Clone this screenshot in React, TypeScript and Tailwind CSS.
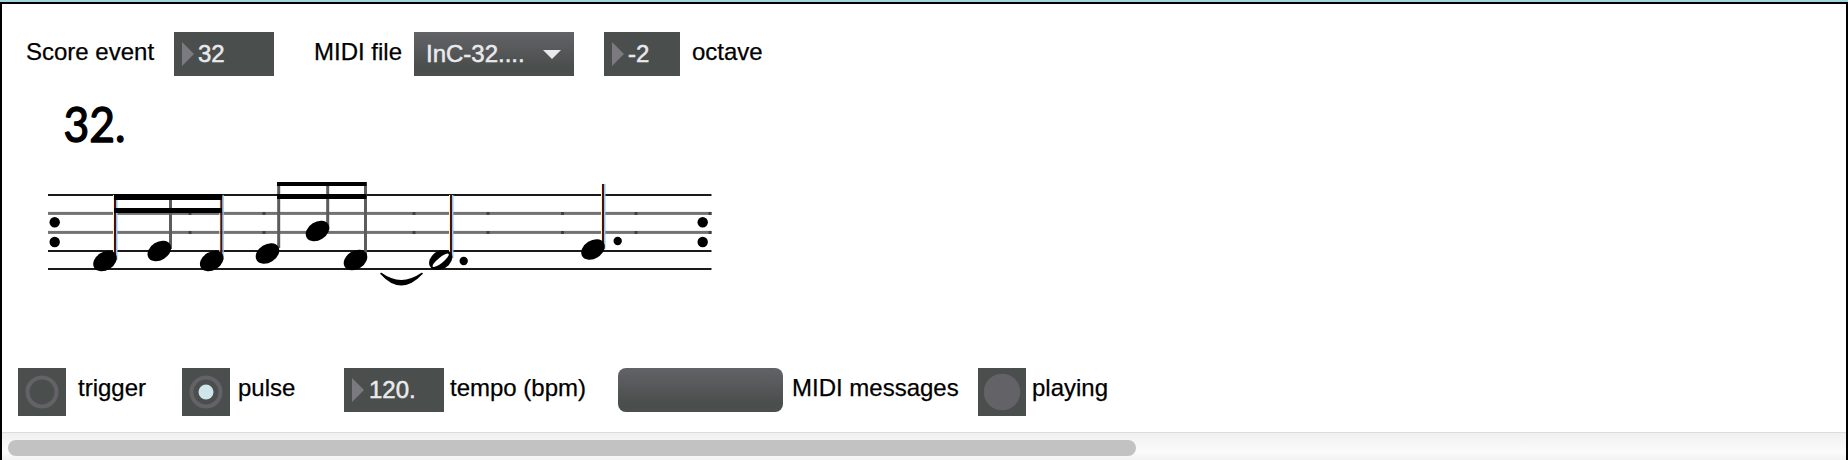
import type { ReactNode } from "react";

function Label({ className, children }: { className: string; children: ReactNode }) {
  return (
    <span className={`h-11 shrink-0 pb-1 leading-10 whitespace-pre [-webkit-text-stroke:0.25px_#000] ${className}`}>
      {children}
    </span>
  );
}

function NumberBox({ value, className }: { value: string; className: string }) {
  return (
    <div className={`flex h-11 shrink-0 items-center bg-[#4a4e4c] pl-2 text-[#eaeaee] ${className}`}>
      <svg className="h-6 w-3 shrink-0" viewBox="0 0 12 24">
        <path d="M0 0L12 12L0 24Z" fill="#7a7a80" />
      </svg>
      <span className="leading-[44px] [-webkit-text-stroke:0.5px_#eaeaee]">{value}</span>
    </div>
  );
}

function Tile({ children }: { children: ReactNode }) {
  return (
    <div className="size-12 shrink-0 bg-[#4a4e4c]">
      <svg className="size-12" viewBox="0 0 48 48">
        {children}
      </svg>
    </div>
  );
}

const NOTES = [
  [105, 261],
  [159.3, 251],
  [211.7, 261],
  [267.5, 253.5],
  [317.5, 231],
  [355.5, 260],
  [593, 249.5],
];

const GREY_STEMS = [
  [170.5, 198, 249],
  [278.7, 182, 248],
  [327.7, 184, 230],
  [365.5, 182, 258],
];

const DARK_STEMS = [
  [115, 195, 260],
  [221.3, 195, 260],
  [451, 195, 258],
  [603, 184, 249],
];

const DOTS = [
  [54.7, 222.3, 5.2],
  [54.7, 242, 5.2],
  [702.7, 222.3, 5.2],
  [702.7, 242, 5.2],
  [463.7, 261, 4.2],
  [617.7, 241, 4.2],
];

const TICKS = [190, 264, 414, 488, 562.5, 636, 710];

function Score() {
  return (
    <svg className="block h-[292px] w-[720px]" viewBox="0 76 720 292">
      <text
        x="63.5"
        y="141.5"
        fontFamily="Lato, 'Noto Sans', sans-serif"
        fontSize="49"
        textLength="62"
        lengthAdjust="spacingAndGlyphs"
        stroke="#000"
        strokeWidth="1.4"
        strokeLinejoin="round"
      >
        32.
      </text>
      {[213.4, 232.4].map((y) => (
        <rect key={y} x="48" y={y - 1.5} width="663.5" height="3" fill="#727272" />
      ))}
      {[195, 251, 269].map((y) => (
        <rect key={y} x="48" y={y - 1} width="663.5" height="2" fill="#1a1a1a" />
      ))}
      {TICKS.map((x) => (
        <g key={x} fill="#39404e">
          <rect x={x - 1.5} y="212" width="3" height="3" />
          <rect x={x - 1.5} y="231" width="3" height="3" />
        </g>
      ))}
      {GREY_STEMS.map(([x, a, b]) => (
        <rect key={x} x={x - 1.5} y={a} width="3" height={b - a} fill="#5c5c5c" />
      ))}
      {DARK_STEMS.map(([x, a, b]) => (
        <g key={x}>
          <rect x={x - 2} y={a} width="1" height={b - a} fill="#fff3c4" />
          <rect x={x + 1} y={a} width="1.5" height={b - a} fill="#8ec6ee" />
          <rect x={x - 1} y={a} width="2" height={b - a} fill="#481010" />
        </g>
      ))}
      <rect x="114" y="194" width="108" height="6" />
      <rect x="114" y="208" width="108" height="5" />
      <rect x="277" y="182" width="89.5" height="4" />
      <rect x="277" y="194" width="89.5" height="5" />
      {NOTES.map(([x, y]) => (
        <ellipse key={x} cx={x} cy={y} rx="12.7" ry="9" transform={`rotate(-32 ${x} ${y})`} />
      ))}
      <path d="M381 273.500Q401 296 422 273.500Q401 288 381 273.500Z" stroke="#000" strokeWidth="1.6" strokeLinejoin="round" />
      <ellipse cx="440.7" cy="260" rx="12.5" ry="9" transform="rotate(-32 440.7 260)" />
      <ellipse cx="440.7" cy="260.3" rx="10.2" ry="2.7" transform="rotate(-39 440.7 260.3)" fill="#fff" />
      {DOTS.map(([x, y, r]) => (
        <circle key={`${x}-${y}`} cx={x} cy={y} r={r} />
      ))}
    </svg>
  );
}

export default function App() {
  return (
    <div className="flex h-[460px] w-[1848px] flex-col overflow-hidden bg-white font-['Liberation_Sans',Arial,sans-serif] text-2xl text-black">
      <div className="h-0.5 shrink-0 bg-[#a3d5df]" />
      <div className="flex grow flex-col border-x-2 border-t-2 border-black">
        <div className="flex h-[72px] shrink-0 pt-7">
          <Label className="w-[172px] pl-6">Score event</Label>
          <NumberBox value="32" className="w-[100px] gap-1" />
          <Label className="w-[140px] pl-10">MIDI file</Label>
          <div className="flex h-11 w-40 shrink-0 items-center justify-between bg-linear-to-b from-[#636367] to-[#4a4e4c] to-80% pr-[13px] pl-3 text-[#eaeaee]">
            <span className="leading-[44px] [-webkit-text-stroke:0.5px_#eaeaee]">InC-32....</span>
            <svg className="h-[9px] w-[18px]" viewBox="0 0 18 9">
              <path d="M0 0H18L9 9Z" fill="#eaeaee" />
            </svg>
          </div>
          <NumberBox value="-2" className="ml-[30px] w-[76px] gap-1" />
          <Label className="pl-3">octave</Label>
        </div>
        <div className="-ml-0.5 h-[292px] shrink-0">
          <Score />
        </div>
        <div className="flex h-16 shrink-0 pl-4">
          <Tile>
            <circle cx="24" cy="24" r="14.5" fill="none" stroke="#626267" strokeWidth="4" />
          </Tile>
          <Label className="w-[116px] pl-3">trigger</Label>
          <Tile>
            <circle cx="24" cy="24" r="14.5" fill="none" stroke="#626267" strokeWidth="4" />
            <circle cx="24" cy="24" r="7.5" fill="#cee5ea" />
          </Tile>
          <Label className="w-[114px] pl-2">pulse</Label>
          <NumberBox value="120." className="w-[100px] gap-[5px]" />
          <Label className="w-[174px] pl-[6px]">tempo (bpm)</Label>
          <div className="h-11 w-[165px] shrink-0 rounded-lg bg-linear-to-b from-[#636367] to-[#4a4e4c] to-80%" />
          <Label className="w-[195px] pl-[9px]">MIDI messages</Label>
          <Tile>
            <circle cx="24" cy="24" r="18.3" fill="#626267" />
          </Tile>
          <Label className="pl-1.5">playing</Label>
        </div>
        <div className="h-7 shrink-0 border-t border-[#dcdcdc] bg-linear-to-b from-[#f0f0f0] via-[#fbfbfb] via-70% to-[#f2f2f2] pt-[7px] pl-1.5">
          <div className="h-4 w-[1128px] rounded-full bg-[#c2c2c2]" />
        </div>
      </div>
    </div>
  );
}
